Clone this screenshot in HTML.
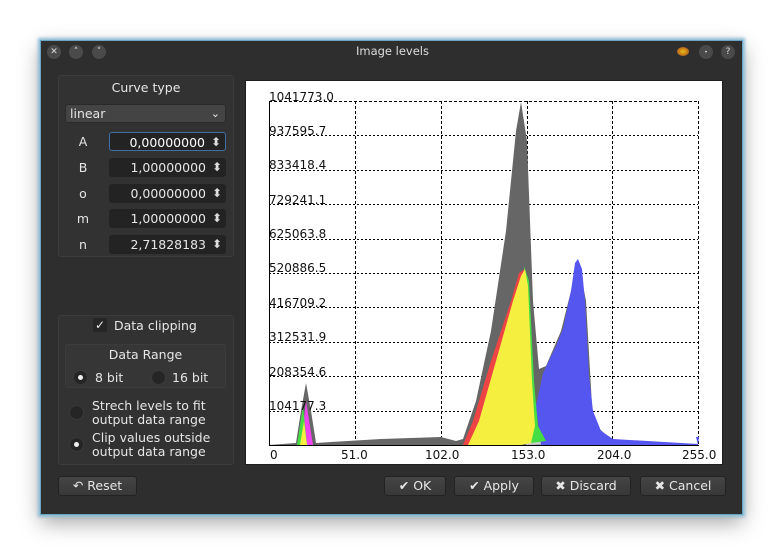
<!DOCTYPE html>
<html><head><style>
*{margin:0;padding:0;box-sizing:border-box}
body{width:783px;height:554px;background:#fff;position:relative;overflow:hidden;font-family:"DejaVu Sans","Liberation Sans",sans-serif;font-size:12.5px;color:#e6e6e6}
.a{position:absolute}
#win{left:40px;top:40px;width:703px;height:475px;background:#2e2e2e;border:1px solid #6aa6c4;box-shadow:0 0 3px 2px #8dbdd6,0 8px 20px rgba(0,0,0,0.35)}
.tb{width:14px;height:14px;border-radius:50%;background:#4a4a4a;top:4px;font-size:9px;text-align:center;line-height:14px;color:#ddd}
.panel{background:#323232;border:1px solid #3c3c3c;border-radius:3px}
.lbl{width:40px;text-align:center}
.spin{left:68px;width:117px;height:19px;background:#232323;border-radius:3px;text-align:right;padding-right:20px;line-height:19px;font-size:12.5px}
.spin:after{content:"⬍";position:absolute;right:4px;top:0;font-size:12px;color:#ddd}
.radio{width:15px;height:15px;border-radius:50%;background:#252525;border:1px solid #3a3a3a}
.radio.on:after{content:"";position:absolute;left:4px;top:4px;width:5px;height:5px;border-radius:50%;background:#eee}
.btn{height:20px;background:linear-gradient(#454545,#383838);border:1px solid #222;border-radius:3px;line-height:18px;text-align:center;font-size:12.5px}
</style></head><body>
<div id="win" class="a">
 <div class="a tb" style="left:6px">✕</div>
 <div class="a tb" style="left:28px">˄</div>
 <div class="a tb" style="left:51px">˅</div>
 <div class="a" style="left:0;width:703px;top:3px;text-align:center;font-size:11.5px;color:#ddd">Image levels</div>
 <div class="a" style="left:636px;top:6px;width:12px;height:9px;border-radius:50%;background:radial-gradient(#e8c020,#c07010 60%,#4040b0)"></div>
 <div class="a tb" style="left:658px"><span style="font-size:6px">•</span></div>
 <div class="a tb" style="left:680px">?</div>

 <div class="a panel" style="left:17px;top:34px;width:176px;height:182px"></div>
 <div class="a" style="left:17px;top:39px;width:176px;text-align:center">Curve type</div>
 <div class="a" style="left:24px;top:63px;width:161px;height:19px;background:#444;border:1px solid #2a2a2a;border-radius:3px;padding-left:4px;line-height:17px">linear<span style="position:absolute;right:5px;font-size:11px">⌄</span></div>
 <div class="a lbl" style="left:22px;top:93px">A</div>
 <div class="a spin" style="top:91px;border:1px solid #3e6fa8;color:#fff">0,00000000</div>
 <div class="a lbl" style="left:22px;top:119px">B</div>
 <div class="a spin" style="top:117px">1,00000000</div>
 <div class="a lbl" style="left:22px;top:145px">o</div>
 <div class="a spin" style="top:143px">0,00000000</div>
 <div class="a lbl" style="left:22px;top:170px">m</div>
 <div class="a spin" style="top:168px">1,00000000</div>
 <div class="a lbl" style="left:22px;top:196px">n</div>
 <div class="a spin" style="top:194px">2,71828183</div>

 <div class="a panel" style="left:17px;top:274px;width:176px;height:150px"></div>
 <div class="a" style="left:52px;top:277px;width:14px;height:14px;background:#262626;border-radius:2px;font-size:12px;line-height:14px;text-align:center;color:#eee">✓</div>
 <div class="a" style="left:73px;top:277px">Data clipping</div>
 <div class="a panel" style="left:24px;top:303px;width:161px;height:44px;background:#363636"></div>
 <div class="a" style="left:24px;top:306px;width:161px;text-align:center">Data Range</div>
 <div class="a radio on" style="left:32px;top:329px"></div>
 <div class="a" style="left:54px;top:329px">8 bit</div>
 <div class="a radio" style="left:110px;top:329px"></div>
 <div class="a" style="left:131px;top:329px">16 bit</div>
 <div class="a radio" style="left:28px;top:364px"></div>
 <div class="a" style="left:51px;top:358px;line-height:14px">Strech levels to fit<br>output data range</div>
 <div class="a radio on" style="left:28px;top:396px"></div>
 <div class="a" style="left:51px;top:390px;line-height:14px">Clip values outside<br>output data range</div>

 <div class="a btn" style="left:17px;top:435px;width:79px">↶ Reset</div>

 <div class="a" style="left:204px;top:39px;width:478px;height:385px;background:#fff;border:1px solid #1e1e1e"></div>
 <svg class="a" style="left:-40px;top:-40px" width="783" height="554">
  <g stroke="#000" stroke-width="1" stroke-dasharray="2,2" fill="none">
   <line x1="268" y1="100.5" x2="697" y2="100.5" stroke-dasharray="3,2"/>
   <line x1="268" y1="134.5" x2="697" y2="134.5"/><line x1="268" y1="169.5" x2="697" y2="169.5"/>
   <line x1="268" y1="203.5" x2="697" y2="203.5"/><line x1="268" y1="238.5" x2="697" y2="238.5"/>
   <line x1="268" y1="272.5" x2="697" y2="272.5"/><line x1="268" y1="306.5" x2="697" y2="306.5"/>
   <line x1="268" y1="341.5" x2="697" y2="341.5"/><line x1="268" y1="375.5" x2="697" y2="375.5"/>
   <line x1="268" y1="410.5" x2="697" y2="410.5"/>
   <g stroke-dasharray="3,2"><line x1="354.5" y1="100" x2="354.5" y2="444"/><line x1="440.5" y1="100" x2="440.5" y2="444"/><line x1="526.5" y1="100" x2="526.5" y2="444"/><line x1="611.5" y1="100" x2="611.5" y2="444"/><line x1="697.5" y1="100" x2="697.5" y2="444"/></g>
  </g>
  <polygon fill="#666" points="268,444 295,442 300,410 305,382 310,410 315,442 330,441 380,438 440,436 455,440 462,438 475,400 490,330 505,230 515,130 520,101 526,140 532,300 538,368 545,365 560,330 570,290 577,258 585,300 592,422 612,440 697,443 697,444"/>
  <polygon fill="#ccc" points="525,444 530,425 545,440 560,443 525,444"/>
  <polygon fill="#5555f0" points="535,405 542,372 555,345 562,328 570,290 574,262 577,258 581,268 584,300 588,375 592,410 600,430 612,438 697,443 697,444 540,444"/>
  <polygon fill="#ee4444" points="462,444 472,420 490,360 510,300 518,272 524,268 520,300 475,444"/>
  <polygon fill="#44dd44" points="523,265 528,280 533,380 537,425 545,440 530,442"/>
  <polygon fill="#f5f040" points="467,444 478,420 495,360 512,300 520,275 524,268 527,285 531,380 534,425 530,442 520,444"/>
  <polygon fill="#5555f0" points="697,444 695,436 698,436"/>
  <polygon fill="#ee44ee" points="300,444 305,400 312,444"/>
  <polygon fill="#44dd44" points="296,444 302,405 306,444"/>
  <polygon fill="#f5f040" points="299,444 303,420 306,444"/>
  <line x1="268.5" y1="100" x2="268.5" y2="444" stroke="#000"/>
  <line x1="268" y1="444.5" x2="698" y2="444.5" stroke="#000"/>
  <g font-family="DejaVu Sans,Liberation Sans,sans-serif" font-size="12" fill="#111">
   <text x="268" y="100">1041773.0</text><text x="268" y="134">937595.7</text><text x="268" y="168">833418.4</text>
   <text x="268" y="203">729241.1</text><text x="268" y="237">625063.8</text><text x="268" y="271">520886.5</text>
   <text x="268" y="306">416709.2</text><text x="268" y="340">312531.9</text><text x="268" y="375">208354.6</text>
   <text x="268" y="409">104177.3</text>
   <text x="269" y="458">0</text><text x="340" y="458">51.0</text><text x="424" y="458">102.0</text><text x="510" y="458">153.0</text><text x="596" y="458">204.0</text><text x="681" y="458">255.0</text>
  </g>
 </svg>

 <div class="a btn" style="left:343px;top:435px;width:62px">✔ OK</div>
 <div class="a btn" style="left:413px;top:435px;width:80px">✔ Apply</div>
 <div class="a btn" style="left:500px;top:435px;width:90px">✖ Discard</div>
 <div class="a btn" style="left:599px;top:435px;width:86px">✖ Cancel</div>
</div>
</body></html>
